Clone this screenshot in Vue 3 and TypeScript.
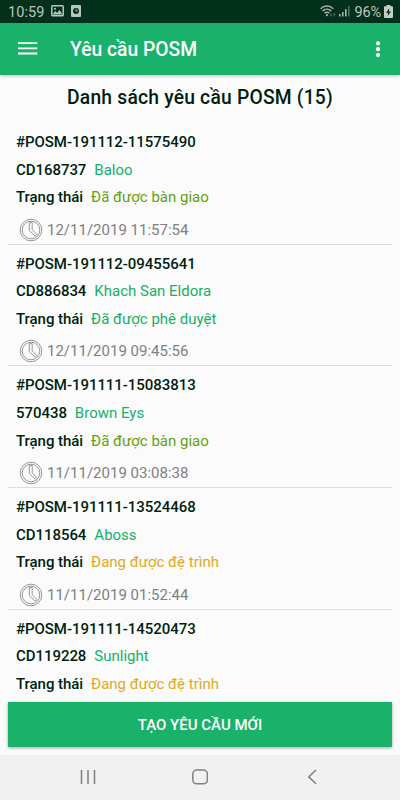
<script setup lang="ts">
interface PosmRequest {
  id: string
  code: string
  customer: string
  status: string
  tone: 'delivered' | 'approved' | 'pending'
  time?: string
}

const requests: PosmRequest[] = [
  { id: '#POSM-191112-11575490', code: 'CD168737', customer: 'Baloo', status: 'Đã được bàn giao', tone: 'delivered', time: '12/11/2019 11:57:54' },
  { id: '#POSM-191112-09455641', code: 'CD886834', customer: 'Khach San Eldora', status: 'Đã được phê duyệt', tone: 'approved', time: '12/11/2019 09:45:56' },
  { id: '#POSM-191111-15083813', code: '570438', customer: 'Brown Eys', status: 'Đã được bàn giao', tone: 'delivered', time: '11/11/2019 03:08:38' },
  { id: '#POSM-191111-13524468', code: 'CD118564', customer: 'Aboss', status: 'Đang được đệ trình', tone: 'pending', time: '11/11/2019 01:52:44' },
  { id: '#POSM-191111-14520473', code: 'CD119228', customer: 'Sunlight', status: 'Đang được đệ trình', tone: 'pending' },
]
</script>

<template>
  <div class="screen">
    <div class="statusbar">
      <span class="clock">10:59</span>
      <svg class="pic" width="13" height="12" viewBox="0 0 13 12">
        <rect x=".8" y=".8" width="11.4" height="10" rx=".8" fill="none" stroke="#b9c6bf" stroke-width="1.5" />
        <path d="M1.5 9.6 4.2 6l2 2 2.3-3 3 4.6z" fill="#b9c6bf" />
        <circle cx="4" cy="3.7" r="1" fill="#b9c6bf" />
      </svg>
      <svg class="app" width="10" height="12" viewBox="0 0 10 12">
        <rect width="10" height="12" rx="1" fill="#b9c6bf" />
        <circle cx="5" cy="6" r="3" fill="#02301b" />
        <path d="M5 4.2V6h1.7" fill="none" stroke="#b9c6bf" stroke-width=".9" />
      </svg>
      <span class="grow"></span>
      <svg class="wifi" width="16" height="13" viewBox="0 0 16 13" fill="none" stroke="#a3b3ab" stroke-width="1.5">
        <path d="M.6 3.7C4.3.1 9.6.1 13.3 3.7" />
        <path d="M2.6 6.1c2.5-2.4 6.2-2.4 8.7 0" />
        <path d="M4.6 8.3c1.4-1.3 3.3-1.3 4.7 0" />
        <circle cx="6.9" cy="10.2" r="1.1" fill="#a3b3ab" stroke="none" />
        <path d="M11 8.2v3M9.9 10l1.1 1.4L12.1 10M14.3 11.4v-3M13.2 9.7l1.1-1.4 1.1 1.4" stroke="#4e6e5f" stroke-width=".9" />
      </svg>
      <svg class="signal" width="11" height="12" viewBox="0 0 11 12">
        <path d="M0 9h1.6v2.5H0zM3 7h1.6v4.5H3zM6 4h1.6v7.5H6z" fill="#a3b3ab" />
        <path d="M9 1h1.6v10.5H9z" fill="#4e6e5f" />
      </svg>
      <span class="percent">96%</span>
      <svg class="battery" width="9" height="13" viewBox="0 0 9 13">
        <path d="M2.5 0h4v1.3H8q1 0 1 1V12q0 1-1 1H1q-1 0-1-1V2.3q0-1 1-1h1.5z" fill="#c4cec8" />
        <path d="M5.3 3.2 2 7.800h2L3.600 11 7 6.500H5z" fill="#02301b" />
      </svg>
    </div>

    <header class="appbar">
      <svg class="menu" width="20" height="14" viewBox="0 0 20 14">
        <path d="M0 .2h19.300v1.900H0zM0 5.400h19.300v1.900H0zM0 10.600h19.300v1.900H0z" fill="#fff" />
      </svg>
      <h1>Yêu cầu POSM</h1>
      <svg class="more" width="6" height="18" viewBox="0 0 6 18" fill="#fff">
        <circle cx="3" cy="3.400" r="2.100" />
        <circle cx="3" cy="9.200" r="2.100" />
        <circle cx="3" cy="15" r="2.100" />
      </svg>
    </header>

    <main class="content">
      <h2>Danh sách yêu cầu POSM (15)</h2>
      <ul class="list">
        <li v-for="r in requests" :key="r.id" class="item">
          <div class="line"><b>{{ r.id }}</b></div>
          <div class="line"><b>{{ r.code }}</b><span class="name">{{ r.customer }}</span></div>
          <div class="line"><b>Trạng thái</b><span :class="r.tone">{{ r.status }}</span></div>
          <div v-if="r.time" class="time">
            <svg width="24" height="24" viewBox="0 0 24 24" fill="none" stroke="#8c8c8c" stroke-width=".9">
              <circle cx="12" cy="12" r="10.800" />
              <circle cx="12" cy="12" r="8.800" />
              <path d="M10.300 4.600h2.900v7.200l4.600 4.700-1.600 1.700-5.900-5.600z" />
            </svg>
            <span>{{ r.time }}</span>
          </div>
        </li>
      </ul>
    </main>

    <div class="action">
      <button type="button">TẠO YÊU CẦU MỚI</button>
    </div>

    <nav class="navbar">
      <svg width="16" height="16" viewBox="0 0 16 16" fill="none" stroke="#808080" stroke-width="1.500">
        <path d="M1.500 1v14M8 1v14M14.500 1v14" />
      </svg>
      <svg width="16" height="16" viewBox="0 0 16 16" fill="none" stroke="#808080" stroke-width="1.500">
        <rect x=".8" y="1" width="14.600" height="13.800" rx="4" />
      </svg>
      <svg width="16" height="16" viewBox="0 0 16 16" fill="none" stroke="#808080" stroke-width="1.500">
        <path d="M12 1 4.700 7.900l7.300 6.800" />
      </svg>
    </nav>
  </div>
</template>

<style>
body {
  margin: 0;
  overflow: hidden;
}
</style>

<style scoped>
.screen {
  width: 400px;
  height: 800px;
  display: flex;
  flex-direction: column;
  overflow: hidden;
  background: #fbfbfb;
  font-family: Roboto, "Liberation Sans", sans-serif;
  color: #011f10;
}
.statusbar {
  flex: none;
  height: 22.5px;
  box-sizing: border-box;
  display: flex;
  align-items: center;
  padding: 0 7.5px 0 8px;
  background: #02301b;
  color: #b9c6bf;
  font-size: 14.5px;
}
.clock {
  width: 43px;
  letter-spacing: 0.1px;
  padding-top: 2px;
}
.pic {
  margin-right: 7px;
}
.grow {
  flex: 1;
}
.wifi {
  margin-right: 3px;
}
.signal {
  margin-right: 4.5px;
}
.percent {
  padding-top: 2px;
  margin-right: 2.5px;
  letter-spacing: -0.1px;
}
.appbar {
  flex: none;
  height: 52.5px;
  box-sizing: border-box;
  display: flex;
  align-items: center;
  padding: 0 18.7px 0 18px;
  background: #1ab26b;
  color: #fff;
  box-shadow: 0 1px 3px rgba(0, 0, 0, 0.25);
  z-index: 1;
}
.appbar h1 {
  flex: 1;
  margin: 0 0 0 32px;
  padding-top: 2px;
  font-size: 19.3px;
  font-weight: 500;
}
.content {
  flex: 1;
  min-height: 0;
  overflow: hidden;
}
h2 {
  margin: 0;
  height: 48px;
  line-height: 46px;
  text-align: center;
  font-size: 19.3px;
  font-weight: 500;
  letter-spacing: 0.2px;
}
.list {
  list-style: none;
  margin: 0;
  padding: 0 8px;
}
.item {
  height: 121.66px;
  box-sizing: border-box;
  padding: 6px 8px 0;
  border-bottom: 1px solid #dcdcdc;
  font-size: 15px;
}
.line {
  display: flex;
  height: 27.6px;
  line-height: 27.6px;
  gap: 8px;
  white-space: nowrap;
}
.line b {
  font-weight: 500;
  letter-spacing: -0.05px;
}
.name {
  color: #16b067;
}
.delivered {
  color: #669f12;
}
.approved {
  color: #16b067;
}
.pending {
  color: #e0a91c;
}
.time {
  display: flex;
  align-items: center;
  gap: 4px;
  height: 36px;
  padding-left: 3px;
  color: #808080;
}
.action {
  flex: none;
  height: 53px;
  box-sizing: border-box;
  padding: 0 8px 7.5px;
  background: #fbfbfb;
}
button {
  display: block;
  width: 100%;
  height: 45.5px;
  border: 0;
  padding: 1px 0 0;
  background: #1ab26b;
  color: #fff;
  font: 500 15px Roboto, "Liberation Sans", sans-serif;
  box-shadow: 0 1px 3px rgba(0, 0, 0, 0.35);
}
.navbar {
  flex: none;
  height: 45.5px;
  box-sizing: border-box;
  display: flex;
  align-items: center;
  justify-content: space-between;
  padding: 0 80.5px 0 79.5px;
  background: #f1f1f1;
}
</style>
